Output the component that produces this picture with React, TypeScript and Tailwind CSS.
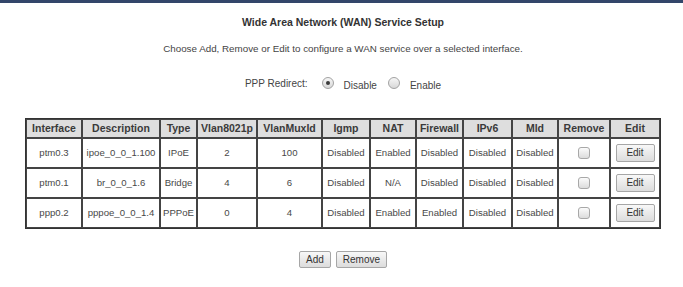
import React from 'react';

const columns = [
  { label: 'Interface', className: 'w-[56px]' },
  { label: 'Description', className: 'w-[78px]' },
  { label: 'Type', className: 'w-[37px]' },
  { label: 'Vlan8021p', className: 'w-[60px]' },
  { label: 'VlanMuxId', className: 'w-[65px]' },
  { label: 'Igmp', className: 'w-[48px]' },
  { label: 'NAT', className: 'w-[46px]' },
  { label: 'Firewall', className: 'w-[47px]' },
  { label: 'IPv6', className: 'w-[49px]' },
  { label: 'Mld', className: 'w-[46px]' },
  { label: 'Remove', className: 'w-[52px]' },
  { label: 'Edit', className: 'w-[50px]' },
];

// WAN services shown in the table
const services = [
  { iface: 'ptm0.3', desc: 'ipoe_0_0_1.100', type: 'IPoE', vlan: '2', mux: '100', igmp: 'Disabled', nat: 'Enabled', firewall: 'Disabled', ipv6: 'Disabled', mld: 'Disabled' },
  { iface: 'ptm0.1', desc: 'br_0_0_1.6', type: 'Bridge', vlan: '4', mux: '6', igmp: 'Disabled', nat: 'N/A', firewall: 'Disabled', ipv6: 'Disabled', mld: 'Disabled' },
  { iface: 'ppp0.2', desc: 'pppoe_0_0_1.4', type: 'PPPoE', vlan: '0', mux: '4', igmp: 'Disabled', nat: 'Enabled', firewall: 'Enabled', ipv6: 'Disabled', mld: 'Disabled' },
];

function Radio({ checked }: { checked?: boolean }) {
  return (
    <span className="inline-flex w-[12px] h-[12px] rounded-full border border-[#a2a2a2] bg-gradient-to-b from-[#f6f6f6] to-[#d8d8d8] items-center justify-center">
      {checked && <span className="w-[4px] h-[4px] rounded-full bg-[#3a3a3a]" />}
    </span>
  );
}

function Checkbox() {
  return (
    <span className="inline-block w-[12px] h-[12px] rounded-[3px] border border-[#a8a8a8] bg-gradient-to-b from-[#fbfbfb] to-[#dcdcdc] align-middle" />
  );
}

function GrayButton({ children, className = '' }: { children: React.ReactNode; className?: string }) {
  return (
    <button className={`border border-[#a6a6a6] rounded-[2px] bg-gradient-to-b from-[#f8f8f8] to-[#dcdcdc] text-[10px] leading-none text-[#333] ${className}`}>
      {children}
    </button>
  );
}

export default function App() {
  return (
    <div className="w-[683px] min-h-[287px] bg-white font-['Liberation_Sans',Arial,sans-serif] text-[#444]">
      <div className="h-[3px] bg-[#33466a]" />

      <div className="pl-[3px] text-center">
        <h1 className="mt-[13px] text-[10.5px] leading-[13px] font-bold text-[#333]">
          Wide Area Network (WAN) Service Setup
        </h1>
        <p className="mt-[13px] text-[9.8px] leading-[13px] text-[#444]">
          Choose Add, Remove or Edit to configure a WAN service over a selected interface.
        </p>

        {/* PPP redirect */}
        <div className="mt-[21px] h-[14px] flex items-center justify-center text-[10px] text-[#444]">
          <span className="mr-[14px]">PPP Redirect:</span>
          <Radio checked />
          <span className="ml-[10px] mr-[11px] pt-[4px]">Disable</span>
          <Radio />
          <span className="ml-[10px] pt-[4px]">Enable</span>
        </div>

        <table className="mt-[28px] mx-auto w-[636px] table-fixed border-separate border-spacing-0 border border-[#333]">
          <thead>
            <tr>
              {columns.map((col) => (
                <th
                  key={col.label}
                  className={`${col.className} h-[19px] p-0 border border-[#444] bg-[#dedede] text-[10.5px] font-bold text-[#3a3a3a] text-center`}
                >
                  {col.label}
                </th>
              ))}
            </tr>
          </thead>
          <tbody className="text-[9.6px] text-[#484848]">
            {services.map((s) => (
              <tr key={s.iface}>
                <td className="h-[30px] p-0 border border-[#444] text-center">{s.iface}</td>
                <td className="p-0 border border-[#444] text-center">{s.desc}</td>
                <td className="p-0 border border-[#444] text-center">{s.type}</td>
                <td className="p-0 border border-[#444] text-center">{s.vlan}</td>
                <td className="p-0 border border-[#444] text-center">{s.mux}</td>
                <td className="p-0 border border-[#444] text-center">{s.igmp}</td>
                <td className="p-0 border border-[#444] text-center">{s.nat}</td>
                <td className="p-0 border border-[#444] text-center">{s.firewall}</td>
                <td className="p-0 border border-[#444] text-center">{s.ipv6}</td>
                <td className="p-0 border border-[#444] text-center">{s.mld}</td>
                <td className="p-0 border border-[#444] text-center">
                  <Checkbox />
                </td>
                <td className="p-0 border border-[#444] text-center">
                  <GrayButton className="w-[39px] h-[18px] align-middle">Edit</GrayButton>
                </td>
              </tr>
            ))}
          </tbody>
        </table>

        <div className="mt-[22px] flex justify-center gap-[5px]">
          <GrayButton className="h-[17px] px-[6px]">Add</GrayButton>
          <GrayButton className="h-[17px] px-[6px]">Remove</GrayButton>
        </div>
      </div>
    </div>
  );
}
